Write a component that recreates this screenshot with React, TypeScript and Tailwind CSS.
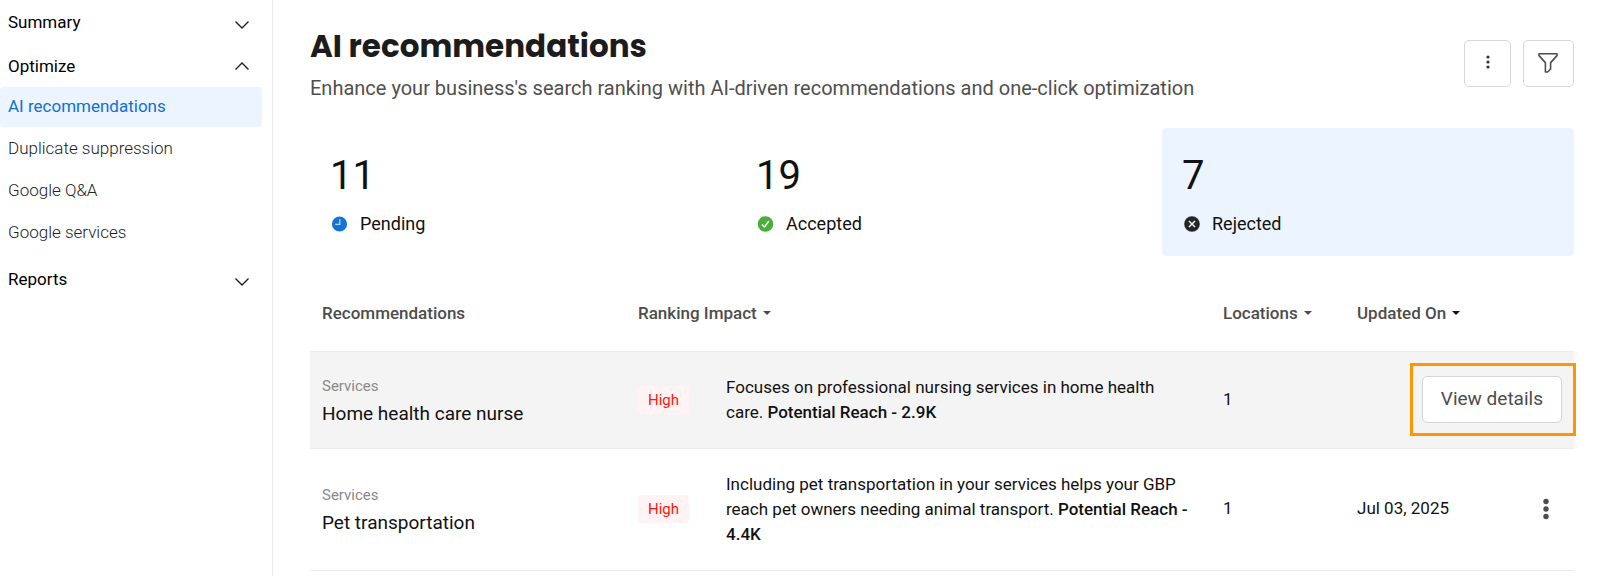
import type { ReactNode } from "react";

type NavSection = { title: string; open?: boolean; items?: string[] };

const sections: NavSection[] = [
  { title: "Summary" },
  {
    title: "Optimize",
    open: true,
    items: ["AI recommendations", "Duplicate suppression", "Google Q&A", "Google services"],
  },
  { title: "Reports" },
];

function Chevron({ up = false }: { up?: boolean }) {
  return (
    <svg width="16" height="16" viewBox="0 0 16 16" fill="none" stroke="#1f1f1f" strokeWidth="1.4" aria-hidden="true">
      <path d={up ? "M1.5 10.5 8 4l6.5 6.5" : "M1.5 6.5 8 13l6.5-6.5"} />
    </svg>
  );
}

function Caret({ dark = false }: { dark?: boolean }) {
  return (
    <svg width="8" height="4" viewBox="0 0 8 4" fill={dark ? "#111111" : "#4d4d4d"} aria-hidden="true">
      <path d="M0 0h8L4 4z" />
    </svg>
  );
}

function Dots({ width, height, r, gap, fill }: { width: number; height: number; r: number; gap: number; fill: string }) {
  const cx = width / 2;
  const cy = height / 2;
  return (
    <svg width={width} height={height} viewBox={`0 0 ${width} ${height}`} fill={fill} aria-hidden="true">
      <circle cx={cx} cy={cy - gap} r={r} />
      <circle cx={cx} cy={cy} r={r} />
      <circle cx={cx} cy={cy + gap} r={r} />
    </svg>
  );
}

function Sidebar() {
  return (
    <nav className="w-[273px] shrink-0 border-r border-[#ececec] pt-px">
      {sections.map((section) => (
        <div key={section.title}>
          <button type="button" className="flex h-11 w-full items-center justify-between pr-[22px] pl-2 text-[17px] text-black">
            {section.title}
            <Chevron up={section.open} />
          </button>
          {section.items && (
            <ul className="-mt-0.5 flex flex-col gap-0.5 pr-2.5 pb-[5px]">
              {section.items.map((item, i) => (
                <li key={item}>
                  <a
                    href="#"
                    className={
                      i === 0
                        ? "flex h-10 items-center rounded-[4px] bg-[#ebf4ff] pl-2 text-[17px] text-[#1070d4]"
                        : "flex h-10 items-center pl-2 text-[17px] font-light text-[#222222]"
                    }
                  >
                    {item}
                  </a>
                </li>
              ))}
            </ul>
          )}
        </div>
      ))}
    </nav>
  );
}

function StatCard({ count, label, icon, active = false }: { count: number; label: string; icon: ReactNode; active?: boolean }) {
  return (
    <button
      type="button"
      className={
        active
          ? "flex h-32 flex-col gap-2 rounded-[4px] bg-[#ebf4ff] px-5 pt-6 text-left"
          : "flex h-32 flex-col gap-2 rounded-[4px] px-5 pt-6 text-left"
      }
    >
      <span className="text-[40px] leading-[48px] text-[#111111]">{count}</span>
      <span className="flex items-center gap-3 text-[18px] leading-8 text-[#111111]">
        {icon}
        {label}
      </span>
    </button>
  );
}

function ClockIcon() {
  return (
    <svg width="18" height="18" viewBox="0 0 18 18" aria-hidden="true">
      <circle cx="9.5" cy="9" r="7.6" fill="#1473d6" />
      <path d="M9.8 4.2v5.2H5.2" fill="none" stroke="#b9d7f5" strokeWidth="1.3" />
    </svg>
  );
}

function CheckIcon() {
  return (
    <svg width="18" height="18" viewBox="0 0 18 18" aria-hidden="true">
      <circle cx="9.5" cy="9" r="7.8" fill="#4cae3a" />
      <path d="M6 9.6 8.6 12l4.2-6" fill="none" stroke="#fff" strokeWidth="1.4" />
    </svg>
  );
}

function CrossIcon() {
  return (
    <svg width="18" height="18" viewBox="0 0 18 18" aria-hidden="true">
      <circle cx="10" cy="9" r="7.8" fill="#262626" />
      <path d="m7 6 6 6m0-6-6 6" fill="none" stroke="#ebf4ff" strokeWidth="1.5" />
    </svg>
  );
}

function Row({
  name,
  text,
  reach,
  locations,
  highlighted = false,
  children,
}: {
  name: string;
  text: string;
  reach: string;
  locations: number;
  highlighted?: boolean;
  children: ReactNode;
}) {
  return (
    <tr className={highlighted ? "border-y border-[#ececec] bg-[#f4f4f4]" : "border-b border-[#ececec]"}>
      <td className="px-3 py-5">
        <div className="text-[15px] leading-7 text-[#8a8a8a]">Services</div>
        <div className="text-[19px] leading-7 text-[#111111]">{name}</div>
      </td>
      <td className="py-[23px] pr-5 pl-3">
        <div className="flex items-center">
          <div className="w-[88px] shrink-0">
            <span className="inline-block rounded-[4px] bg-[#fff4f3] px-2.5 text-[15px] leading-7 text-[#ff1509]">High</span>
          </div>
          <p className="text-[17px] leading-[25px] text-[#111111]">
            {text} <b className="font-medium">Potential Reach - {reach}</b>
          </p>
        </div>
      </td>
      <td className="px-3 text-[17px] text-[#111111]">{locations}</td>
      <td className="px-3 text-[17px] text-[#111111]">{children}</td>
    </tr>
  );
}

export default function App() {
  return (
    <div className="flex min-h-screen bg-white font-['Roboto',sans-serif]">
      <Sidebar />
      <main className="min-w-0 flex-1 pr-[26px] pl-[37px]">
        <header className="flex items-start justify-between">
          <div className="pt-6">
            <h1 className="font-['Poppins','Inter',sans-serif] text-[31px] leading-11 font-bold text-[#1c1c1c]">AI recommendations</h1>
            <p className="pt-1 text-[20px] leading-8 text-[#4f4f4f]">
              Enhance your business's search ranking with AI-driven recommendations and one-click optimization
            </p>
          </div>
          <div className="flex gap-3 pt-10">
            <button type="button" aria-label="More options" className="flex h-[47px] w-[47px] items-center justify-center rounded-[5px] border border-[#d6d6d6] pb-1">
              <Dots width={6} height={16} r={1.6} gap={5} fill="#333333" />
            </button>
            <button type="button" aria-label="Filter" className="flex h-[47px] w-[51px] items-center justify-center rounded-[5px] border border-[#d6d6d6] pb-0.5">
              <svg width="22" height="22" viewBox="0 0 22 22" fill="none" stroke="#4d4d4d" strokeWidth="1.6" strokeLinejoin="round" aria-hidden="true">
                <path d="M1 1.8h18v1.8l-6.4 7v6.4l-3 3H7.4v-9.4L1 3.6z" />
              </svg>
            </button>
          </div>
        </header>

        <section className="grid grid-cols-3 gap-3.5 pt-6">
          <StatCard count={11} label="Pending" icon={<ClockIcon />} />
          <StatCard count={19} label="Accepted" icon={<CheckIcon />} />
          <StatCard count={7} label="Rejected" icon={<CrossIcon />} active />
        </section>

        <table className="mt-5 w-full table-fixed border-collapse text-left">
          <colgroup>
            <col className="w-1/4" />
            <col />
            <col className="w-[134px]" />
            <col className="w-[229px]" />
          </colgroup>
          <thead>
            <tr className="h-[75px] text-[17px] text-[#4d4d4d]">
              <th className="px-3 font-medium">Recommendations</th>
              <th className="px-3 font-medium">
                <button type="button" className="flex items-center gap-1.5">
                  Ranking Impact <Caret />
                </button>
              </th>
              <th className="px-3 font-medium">
                <button type="button" className="flex items-center gap-1.5">
                  Locations <Caret />
                </button>
              </th>
              <th className="px-3 font-medium">
                <button type="button" className="flex items-center gap-1.5">
                  Updated On <Caret dark />
                </button>
              </th>
            </tr>
          </thead>
          <tbody>
            <Row
              name="Home health care nurse"
              text="Focuses on professional nursing services in home health care."
              reach="2.9K"
              locations={1}
              highlighted
            >
              <div className="flex justify-end">
                <div className="relative">
                  <button type="button" className="block h-[47px] rounded-[5px] border border-[#d6d6d6] bg-white px-[18px] text-[19px] text-[#4d4d4d]">
                    View details
                  </button>
                  <span className="pointer-events-none absolute -inset-y-[13px] -right-3.5 -left-3 border-3 border-[#ff9500]" />
                </div>
              </div>
            </Row>
            <Row
              name="Pet transportation"
              text="Including pet transportation in your services helps your GBP reach pet owners needing animal transport."
              reach="4.4K"
              locations={1}
            >
              <div className="flex items-center justify-between pr-3">
                Jul 03, 2025
                <button type="button" aria-label="Row actions">
                  <Dots width={8} height={24} r={2.7} gap={7.5} fill="#4d4d4d" />
                </button>
              </div>
            </Row>
          </tbody>
        </table>
      </main>
    </div>
  );
}
